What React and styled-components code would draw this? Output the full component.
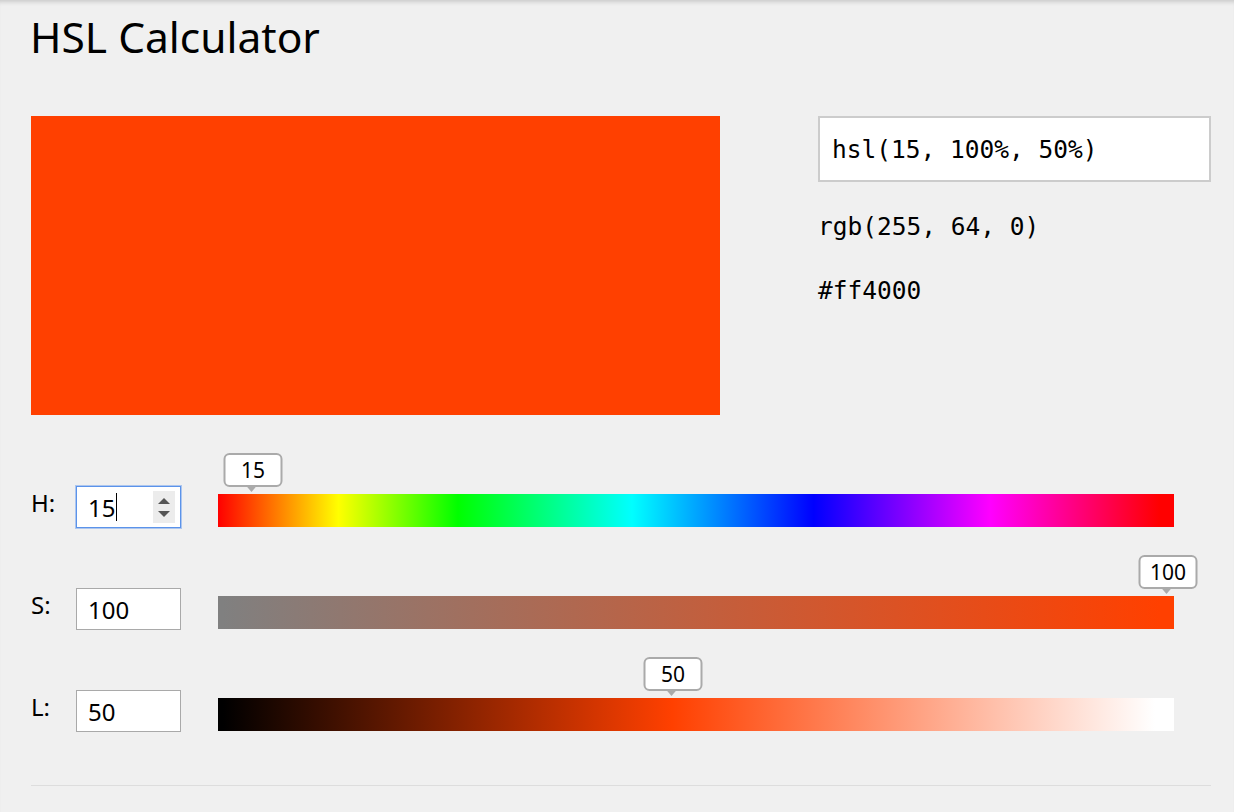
import React from 'react';
import styled, { createGlobalStyle } from 'styled-components';

const GlobalStyle = createGlobalStyle`
  html, body {
    margin: 0;
    padding: 0;
    background: #f0f0f0;
  }
  body {
    font-family: 'Noto Sans', 'Open Sans', sans-serif;
    color: #000;
    min-height: 812px;
    box-shadow: inset 0 5px 4px -3px rgba(0, 0, 0, 0.16);
  }
`;

const Page = styled.div`
  width: 1180px;
  padding: 12px 23px 0 31px;
`;

const Title = styled.h1`
  margin: 0 0 0 -1px;
  font-size: 42.5px;
  font-weight: 400;
  line-height: 50px;
`;

const Top = styled.div`
  display: flex;
  gap: 98px;
  margin-top: 54px;
`;

const Swatch = styled.div`
  width: 689px;
  height: 299px;
  background: ${(p) => p.$color};
`;

const Info = styled.div`
  width: 393px;
  display: flex;
  flex-direction: column;
  font-family: 'DejaVu Sans Mono', 'Liberation Mono', monospace;
  font-size: 24.5px;
`;

const HslBox = styled.div`
  box-sizing: border-box;
  height: 66px;
  display: flex;
  align-items: center;
  padding: 0 12px;
  background: #fff;
  border: 2px solid #cccccc;
`;

const Line = styled.div`
  line-height: 30px;
  margin-top: ${(p) => p.$gap}px;
`;

const Sliders = styled.div`
  margin-top: 71px;
  display: flex;
  flex-direction: column;
  gap: 60px;
`;

const Row = styled.div`
  display: grid;
  grid-template-columns: 45px 105px 956px;
  align-items: start;
`;

const Label = styled.div`
  font-size: 24px;
  line-height: 34px;
`;

const Field = styled.div`
  box-sizing: border-box;
  width: 105px;
  height: 42px;
  display: flex;
  align-items: center;
  padding: 0 5px 0 11px;
  background: #fff;
  border: 1px solid ${(p) => (p.$focused ? '#5b93ea' : '#a9a9a9')};
  box-shadow: ${(p) => (p.$focused ? '0 0 0 1px rgba(91, 147, 234, 0.45)' : 'none')};
  font-size: 24px;
`;

const FieldText = styled.span`
  flex: 1;
  display: flex;
  align-items: center;
`;

const Caret = styled.span`
  width: 1px;
  height: 28px;
  background: #000;
  margin-left: 1px;
`;

const Spinner = styled.div`
  width: 22px;
  height: 32px;
  background: #ececec;
  display: flex;
  flex-direction: column;
  align-items: center;
  justify-content: center;
  gap: 7px;
`;

const Arrow = styled.span`
  width: 0;
  height: 0;
  border-left: 6px solid transparent;
  border-right: 6px solid transparent;
  ${(p) => (p.$down ? 'border-top: 6px solid #555;' : 'border-bottom: 6px solid #555;')}
`;

const Track = styled.div`
  position: relative;
  width: 956px;
  height: 33px;
  margin: 8px 0 0 37px;
  background: ${(p) => p.$bg};
`;

const Tip = styled.div`
  position: absolute;
  bottom: calc(100% + 7px);
  box-sizing: border-box;
  width: 59px;
  height: 34px;
  transform: translateX(-50%);
  background: #fff;
  border: 2px solid #aaaaaa;
  border-radius: 6px;
  display: flex;
  align-items: center;
  justify-content: center;
  font-size: 21px;

  &::after {
    content: '';
    position: absolute;
    top: 100%;
    left: 50%;
    margin-left: -8px;
    border-left: 6px solid transparent;
    border-right: 6px solid transparent;
    border-top: 7px solid #aaaaaa;
  }
`;

const Rule = styled.hr`
  margin: 53px 0 0;
  border: 0;
  border-top: 1px solid #dddddd;
`;

const color = '#ff4000';

const sliders = [
  {
    key: 'H',
    value: '15',
    tip: 35,
    focused: true,
    bg: 'linear-gradient(to right, #f00 0%, #ff0 12.6%, #0f0 25.1%, #0ff 43.3%, #00f 62.3%, #f0f 80.8%, #f00 98.5%)',
  },
  {
    key: 'S',
    value: '100',
    tip: 950,
    bg: `linear-gradient(to right, #808080 0.5%, ${color} 98.5%)`,
  },
  {
    key: 'L',
    value: '50',
    tip: 455,
    bg: `linear-gradient(to right, #000 0.5%, ${color} 47.5%, #fff 98%)`,
  },
];

export default function App() {
  return (
    <>
      <GlobalStyle />
      <Page>
        <Title>HSL Calculator</Title>
        <Top>
          <Swatch $color={color} />
          <Info>
            <HslBox>hsl(15, 100%, 50%)</HslBox>
            <Line $gap={30}>rgb(255, 64, 0)</Line>
            <Line $gap={34}>#ff4000</Line>
          </Info>
        </Top>
        <Sliders>
          {sliders.map((s) => (
            <Row key={s.key}>
              <Label>{s.key}:</Label>
              <Field $focused={s.focused}>
                <FieldText>
                  {s.value}
                  {s.focused && <Caret />}
                </FieldText>
                {s.focused && (
                  <Spinner>
                    <Arrow />
                    <Arrow $down />
                  </Spinner>
                )}
              </Field>
              <Track $bg={s.bg}>
                <Tip style={{ left: s.tip }}>{s.value}</Tip>
              </Track>
            </Row>
          ))}
        </Sliders>
        <Rule />
      </Page>
    </>
  );
}
